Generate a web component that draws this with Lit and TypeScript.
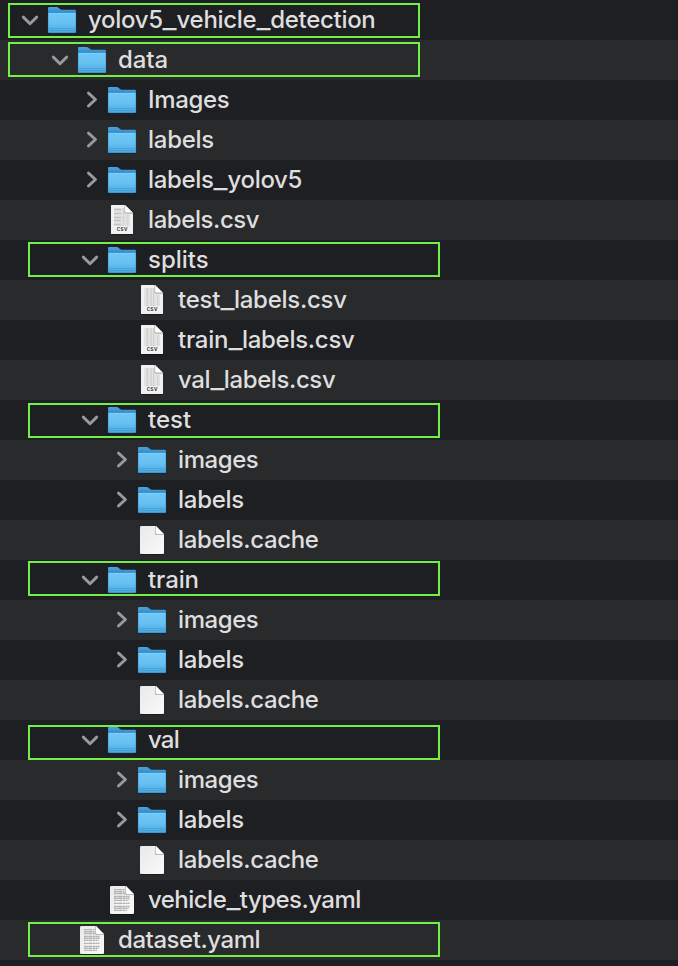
import { LitElement, html, svg, css, nothing } from "lit";
import { customElement, property } from "lit/decorators.js";
import { styleMap } from "lit/directives/style-map.js";

type Kind = "folder" | "csv" | "table" | "blank" | "text";
interface Entry {
  name: string;
  level: number;
  kind: Kind;
  open?: boolean;
  /** top offset of the highlight frame inside the row */
  mark?: number;
  tracking?: number;
}

const entries: Entry[] = [
  { name: "yolov5_vehicle_detection", level: 0, kind: "folder", open: true, mark: 3, tracking: -0.3 },
  { name: "data", level: 1, kind: "folder", open: true, mark: 2, tracking: -0.1 },
  { name: "Images", level: 2, kind: "folder", tracking: -0.35 },
  { name: "labels", level: 2, kind: "folder", tracking: -0.27 },
  { name: "labels_yolov5", level: 2, kind: "folder", tracking: -0.32 },
  { name: "labels.csv", level: 2, kind: "table", tracking: -0.42 },
  { name: "splits", level: 2, kind: "folder", open: true, mark: 2 },
  { name: "test_labels.csv", level: 3, kind: "csv", tracking: -0.26 },
  { name: "train_labels.csv", level: 3, kind: "csv", tracking: -0.28 },
  { name: "val_labels.csv", level: 3, kind: "csv", tracking: -0.4 },
  { name: "test", level: 2, kind: "folder", open: true, mark: 3 },
  { name: "images", level: 3, kind: "folder", tracking: -0.42 },
  { name: "labels", level: 3, kind: "folder", tracking: -0.27 },
  { name: "labels.cache", level: 3, kind: "blank", tracking: -0.37 },
  { name: "train", level: 2, kind: "folder", open: true, mark: 1, tracking: -0.1 },
  { name: "images", level: 3, kind: "folder", tracking: -0.42 },
  { name: "labels", level: 3, kind: "folder", tracking: -0.27 },
  { name: "labels.cache", level: 3, kind: "blank", tracking: -0.37 },
  { name: "val", level: 2, kind: "folder", open: true, mark: 5, tracking: -0.8 },
  { name: "images", level: 3, kind: "folder", tracking: -0.42 },
  { name: "labels", level: 3, kind: "folder", tracking: -0.27 },
  { name: "labels.cache", level: 3, kind: "blank", tracking: -0.37 },
  { name: "vehicle_types.yaml", level: 2, kind: "text", tracking: -0.53 },
  { name: "dataset.yaml", level: 1, kind: "text", mark: 2, tracking: -0.45 },
];

@customElement("file-icon")
class FileIcon extends LitElement {
  @property() kind: Kind = "folder";

  static styles = css`
    :host { display: block; width: 28px; height: 40px; flex: none; }
    svg { display: block; overflow: visible; }
    .tag { font: 700 4.6px "Inter", "Liberation Sans", sans-serif; letter-spacing: 0.5px; fill: #333; }
  `;

  private folder() {
    return svg`
      <defs>
        <linearGradient id="front" x1="0" y1="0" x2="0" y2="1">
          <stop offset="0" stop-color="#6fc8f7"/><stop offset="0.5" stop-color="#69c1f1"/><stop offset="1" stop-color="#48a5dd"/>
        </linearGradient>
        <linearGradient id="back" x1="0" y1="0" x2="0" y2="1">
          <stop offset="0" stop-color="#4da5dc"/><stop offset="0.25" stop-color="#3589c9"/><stop offset="1" stop-color="#3589c9"/>
        </linearGradient>
      </defs>
      <path d="M0.5 33.5H27.5" stroke="#0d1620" stroke-opacity=".6"/>
      <path d="M0 8.3Q0 7 1.3 7H8.4Q9.6 7 10.5 7.8L12 9.1Q12.7 9.7 13.8 9.7H26.7Q28 9.7 28 11V31H0Z" fill="url(#back)"/>
      <path d="M0 14.2Q0 13 1.2 13H26.8Q28 13 28 14.2V31.7Q28 33 26.7 33H1.3Q0 33 0 31.7Z" fill="url(#front)"/>
      <path d="M1 13.4H27" stroke="#82d4fb" stroke-width=".8"/>
      <path d="M0.5 28.5H27.5M0.5 30.5H27.5" stroke="#3f9cd5" stroke-width=".8" opacity=".75"/>
      <path d="M0.8 32.6H27.2" stroke="#3990c7" stroke-width=".8"/>
      <path d="M0.4 14V32M27.6 14V32" stroke="#449fd8" stroke-width=".8" opacity=".7"/>`;
  }

  private csv(grid: boolean) {
    return svg`
      <path d="M3.5 34.5H24.5" stroke="#000" stroke-opacity=".4"/>
      <path d="M3 5.6Q3 5 3.6 5H17L25 13V33.4Q25 34 24.4 34H3.6Q3 34 3 33.4Z" fill="#f1f1f1"/>
      <path d="M6 8H16V14H22V26H6Z" fill="#e3e3e3"/>
      ${grid
        ? svg`<path d="M6 9.5H13M6 13.5H13M6 17.5H13M6 20.5H13M6 24.5H13" stroke="#c2c2c2" stroke-width="1.3"/>
              <path d="M15.5 8.5V26M19.5 15V26" stroke="#d0d0d0" stroke-width="1.8" stroke-dasharray="1.6 .8"/>`
        : svg`<path d="M9.3 8V26" stroke="#c2c2c2" stroke-width="1.5" stroke-dasharray="1.4 1"/>
              <path d="M13 8V26M15.6 8V26M19.8 15V26" stroke="#d2d2d2" stroke-width="1.3"/>`}
      <path d="M16.4 5V12.4Q16.4 13.8 17.8 13.8H25V13L17 5Z" fill="#b0b0b0"/>
      <path d="M17.2 5.2V11.4Q17.2 12.6 18.4 12.6H24.6Z" fill="#fff"/>
      <text class="tag" x="14.4" y="31.2" text-anchor="middle">CSV</text>`;
  }

  private page(lines: boolean) {
    return svg`
      <defs><linearGradient id="paper" x1="0" y1="0" x2="1" y2="1">
        <stop offset="0" stop-color="#e9e9e9"/><stop offset="1" stop-color="#f9f9f9"/></linearGradient></defs>
      <path d="M3 34.5H25" stroke="#000" stroke-opacity=".4"/>
      <path d="M2 7.2Q2 6 3.2 6H17.8L26 14.2V32.8Q26 34 24.8 34H3.2Q2 34 2 32.8Z" fill="url(#paper)"/>
      ${lines ? svg`<path d="M6 9.7H16.5M6 11.6H16.5M6 13.5H17.5M6 16.5H21.5M6 18.4H21.5M6 20.3H20.5M6 23.4H21.5M6 26.5H21.5M6 28.4H20.5M6 30.3H19" stroke="#9a9a9a" stroke-width="1.3" stroke-dasharray="2.7 .4 1.4 .3 3.3 .5" opacity=".75"/>` : nothing}
      <path d="M17 6V13.4Q17 15 18.6 15H26V14.2L17.8 6Z" fill="#b8b8b8"/>
      <path d="M17.9 6.1V12.5Q17.9 13.9 19.3 13.9H25.7Z" fill="#fff"/>`;
  }

  private art() {
    switch (this.kind) {
      case "folder": return this.folder();
      case "csv": return this.csv(false);
      case "table": return this.csv(true);
      default: return this.page(this.kind === "text");
    }
  }

  render() {
    return html`<svg width="28" height="40" viewBox="0 0 28 40">${this.art()}</svg>`;
  }
}

@customElement("app-root")
class AppRoot extends LitElement {
  static styles = css`
    :host { display: block; height: 966px; overflow: hidden; background: #1e1f23; }
    .row { position: relative; display: flex; height: 40px; box-sizing: border-box; background: #1e1f23; }
    .row:nth-child(even) { background: #292a2c; }
    .toggle { width: 20px; height: 40px; margin-right: 8px; flex: none; }
    .toggle path { fill: none; stroke: #98999b; stroke-width: 2.9; stroke-linecap: round; stroke-linejoin: round; }
    .name { margin-left: 12px; font: 500 24px/40px "Inter", "Liberation Sans", sans-serif; color: #dededf; white-space: pre; }
    .wide { display: inline-block; margin: 0 1.5px; transform: scaleX(1.26); }
    .mark { position: absolute; box-sizing: border-box; width: 412px; height: 35px; border: 2px solid #72f048; z-index: 1; }
  `;

  private toggle(e: Entry) {
    const d = e.open ? "M3.3 17.1L10 23.8L16.7 17.1" : "M8.5 13.1L15.5 19.5L8.5 25.9";
    return html`<svg class="toggle" viewBox="0 0 20 40">${e.kind === "folder" ? svg`<path d=${d}/>` : nothing}</svg>`;
  }

  private label(name: string) {
    return name.split("_").map((part, i) => (i ? html`<span class="wide">_</span>${part}` : part));
  }

  render() {
    return html`${entries.map((e) => html`
      <div class="row" style=${styleMap({ paddingLeft: `${20 + e.level * 30}px` })}>
        ${this.toggle(e)}
        <file-icon .kind=${e.kind}></file-icon>
        <span class="name" style=${styleMap({ letterSpacing: `${e.tracking ?? 0}px` })}>${this.label(e.name)}</span>
        ${e.mark === undefined ? nothing : html`<div class="mark" style=${styleMap({ top: `${e.mark}px`, left: e.level < 2 && e.kind === "folder" ? "8px" : "28px" })}></div>`}
      </div>`)}`;
  }
}
